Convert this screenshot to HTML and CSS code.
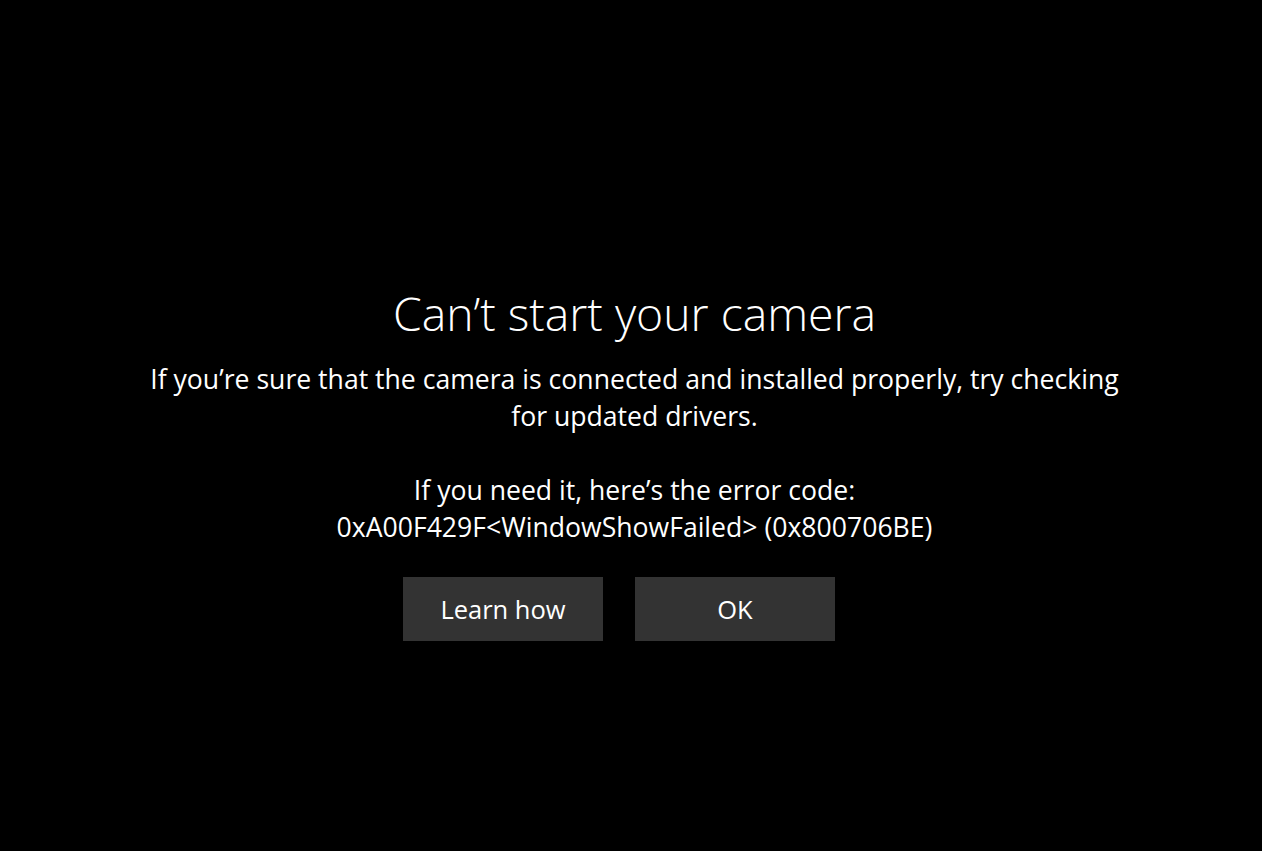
FILE: index.html
```html
<!DOCTYPE html>
<html lang="en">
<head>
<meta charset="utf-8">
<title>Camera</title>
<link rel="stylesheet" href="styles.css">
</head>
<body>
<main class="screen">
  <section class="dialog">
    <h1 class="title">Can’t start your camera</h1>
    <p class="message">If you’re sure that the camera is connected and installed properly, try checking for updated drivers.</p>
    <p class="message code">If you need it, here’s the error code:<br>0xA00F429F&lt;WindowShowFailed&gt; (0x800706BE)</p>
    <div class="actions">
      <button class="btn">Learn how</button>
      <button class="btn">OK</button>
    </div>
  </section>
</main>
</body>
</html>
```

FILE: styles.css
```css
html, body {
  margin: 0;
  padding: 0;
  background: #000;
  height: 100%;
}
.screen {
  min-height: 100%;
  display: flex;
  justify-content: center;
  padding-left: 7px;
  box-sizing: border-box;
  color: #fff;
  font-family: "Open Sans", "Noto Sans", sans-serif;
}
.dialog {
  padding-top: 284px;
  display: flex;
  flex-direction: column;
  align-items: center;
  text-align: center;
  width: 985px;
}
.title {
  margin: 0;
  font-weight: 300;
  font-size: 46.3px;
  line-height: 60px;
}
.message {
  margin: 0;
  font-size: 26.6px;
  line-height: 37px;
}
.message:first-of-type {
  margin-top: 17px;
}
.code {
  margin-top: 37px;
}
.actions {
  display: flex;
  gap: 32px;
  margin-top: 31px;
  margin-right: 31px;
}
.btn {
  width: 200px;
  height: 64px;
  border: none;
  background: #333;
  color: #fff;
  font-family: inherit;
  font-size: 25.5px;
  padding: 0;
}
```
